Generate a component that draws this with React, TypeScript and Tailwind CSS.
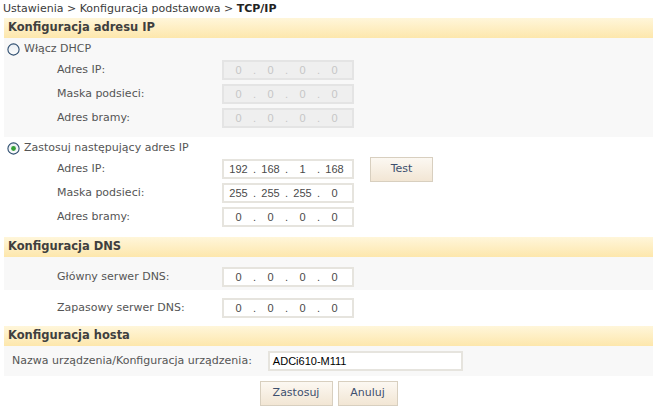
function Radio({ checked }: { checked?: boolean }) {
  return (
    <svg width="13" height="13" viewBox="0 0 13 13" className="shrink-0">
      <defs>
        <linearGradient id={checked ? "rg1" : "rg0"} x1="0" y1="0" x2="0" y2="1">
          <stop offset="0" stopColor="#e8edf2" />
          <stop offset="1" stopColor="#fdfdfd" />
        </linearGradient>
      </defs>
      <circle cx="6.5" cy="6.5" r="5.6" fill={`url(#${checked ? "rg1" : "rg0"})`} stroke="#2f4e70" strokeWidth="1.1" />
      {checked && <circle cx="6.5" cy="6.5" r="2.4" fill="#35a035" />}
    </svg>
  );
}

function IpInput({ value, disabled }: { value: string[]; disabled?: boolean }) {
  return (
    <div
      className={`flex h-[20px] w-[132px] items-center border-2 pl-[1px] font-['Liberation_Sans',Arial,sans-serif] text-[11px] ${
        disabled ? "border-[#e4e4e4] bg-[#efefef] text-[#c6c6c6]" : "border-[#e6e4de] bg-white text-[#4a4a4a]"
      }`}
    >
      {value.map((v, i) => (
        <div key={i} className="flex items-center">
          {i > 0 && <span className="w-[5px] text-center">.</span>}
          <span className="w-[27px] text-center">{v}</span>
        </div>
      ))}
    </div>
  );
}

function SectionHeader({ title }: { title: string }) {
  return (
    <div className="flex h-[20px] items-center bg-gradient-to-b from-[#fff6da] to-[#fde7ac] pl-[4px] text-[11.5px] font-bold text-[#3f3f3f]">
      {title}
    </div>
  );
}

function FieldRow({ label, children }: { label: string; children: React.ReactNode }) {
  return (
    <div className="flex h-[24px] items-center">
      <div className="w-[218px] pl-[53px] text-[#555]">{label}</div>
      {children}
    </div>
  );
}

function Button({ label, w }: { label: string; w: string }) {
  return (
    <button
      className={`flex h-[25px] ${w} items-center justify-center border border-[#d8cfbf] bg-gradient-to-b from-[#fcf8f2] to-[#f2e6d4] text-[11px] text-[#3d4f6e]`}
    >
      {label}
    </button>
  );
}

export default function App() {
  const zeros = ["0", "0", "0", "0"];
  return (
    <div className="h-[412px] w-[657px] bg-white font-['DejaVu_Sans',Verdana,sans-serif] text-[11px] text-[#333]">
      {/* Breadcrumb */}
      <div className="flex h-[18px] items-center pl-[3px] text-[#3a3a3a]">
        Ustawienia &gt; Konfiguracja podstawowa &gt;&nbsp;<span className="font-bold text-[#222]">TCP/IP</span>
      </div>

      <div className="ml-[4px] w-[649px]">
        {/* IP address */}
        <SectionHeader title="Konfiguracja adresu IP" />
        <div className="bg-[#f8f8f8] pt-[2px] pb-[7px]">
          <div className="flex h-[18px] items-center gap-[4px] pl-[3px] text-[#555]">
            <Radio />
            <span>Włącz DHCP</span>
          </div>
          <FieldRow label="Adres IP:">
            <IpInput value={zeros} disabled />
          </FieldRow>
          <FieldRow label="Maska podsieci:">
            <IpInput value={zeros} disabled />
          </FieldRow>
          <FieldRow label="Adres bramy:">
            <IpInput value={zeros} disabled />
          </FieldRow>
        </div>
        <div className="bg-white pt-[2px] pb-[8px]">
          <div className="flex h-[18px] items-center gap-[4px] pl-[3px] text-[#555]">
            <Radio checked />
            <span>Zastosuj następujący adres IP</span>
          </div>
          <FieldRow label="Adres IP:">
            <IpInput value={["192", "168", "1", "168"]} />
            <div className="ml-[16px]">
              <Button label="Test" w="w-[63px]" />
            </div>
          </FieldRow>
          <FieldRow label="Maska podsieci:">
            <IpInput value={["255", "255", "255", "0"]} />
          </FieldRow>
          <FieldRow label="Adres bramy:">
            <IpInput value={zeros} />
          </FieldRow>
        </div>

        {/* DNS */}
        <SectionHeader title="Konfiguracja DNS" />
        <div className="bg-[#f8f8f8] pt-[8px] pb-[1px]">
          <FieldRow label="Główny serwer DNS:">
            <IpInput value={zeros} />
          </FieldRow>
        </div>
        <div className="bg-white pt-[6px] pb-[6px]">
          <FieldRow label="Zapasowy serwer DNS:">
            <IpInput value={zeros} />
          </FieldRow>
        </div>

        {/* Host */}
        <SectionHeader title="Konfiguracja hosta" />
        <div className="flex h-[30px] items-center bg-[#f8f8f8] pl-[8px]">
          <span className="text-[#555]">Nazwa urządzenia/Konfiguracja urządzenia:</span>
          <div className="ml-[16px] flex h-[20px] w-[195px] items-center border-2 border-[#e6e4de] bg-white pl-[3px] font-['Liberation_Sans',Arial,sans-serif] text-[11px] text-black">
            ADCi610-M111
          </div>
        </div>
      </div>

      {/* Actions */}
      <div className="mt-[5px] flex justify-center gap-[5px]">
        <Button label="Zastosuj" w="w-[73px]" />
        <Button label="Anuluj" w="w-[60px]" />
      </div>
    </div>
  );
}
